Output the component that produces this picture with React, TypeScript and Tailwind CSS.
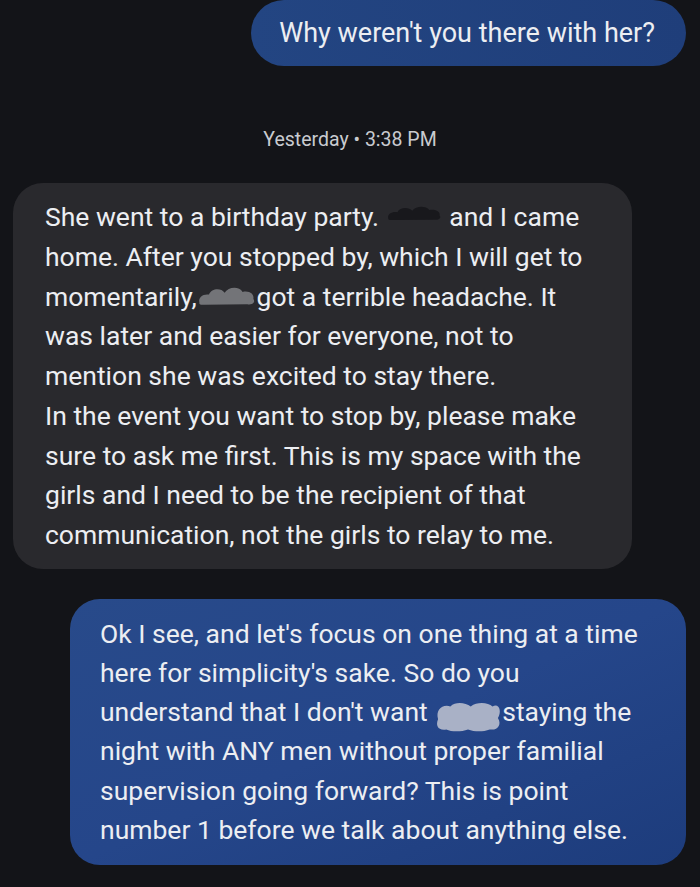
import React from 'react'

const CLOUD =
  'M4 42 C2 30 10 22 20 24 C24 10 40 8 46 20 C52 6 70 4 76 18 C86 14 96 22 94 34 C98 42 92 48 84 46 L12 47 C6 48 3 46 4 42 Z'
const LUMP =
  'M6 30 C2 16 12 6 24 10 C32 2 46 4 54 10 C64 2 80 4 86 10 C96 4 100 18 94 28 C100 38 94 48 82 46 C72 50 60 50 50 46 C40 50 26 50 18 46 C6 48 2 40 6 30 Z'

const Blob = ({ w, h, color, shift = 0, d = CLOUD }: { w: number; h: number; color: string; shift?: number; d?: string }) => (
  <svg
    width={w}
    height={h}
    viewBox="0 0 100 50"
    preserveAspectRatio="none"
    className="inline-block align-middle"
    style={{ transform: `translateY(${shift}px)` }}
  >
    <path d={d} fill={color} />
  </svg>
)

export default function App() {
  return (
    <div
      className="w-[700px] h-[887px] overflow-hidden bg-[#131418] flex flex-col text-[#eceef2]"
      style={{ fontFamily: 'Roboto, "Liberation Sans", sans-serif' }}
    >
      <div className="self-end mr-[14px] h-[66px] rounded-full bg-gradient-to-r from-[#234582] to-[#1f3e7a] pl-[28px] pr-[31px] flex items-center text-[27px]">
        Why weren't you there with her?
      </div>

      <div className="mt-[61px] text-center text-[19.5px] leading-[26px] text-[#c9cbd0]">
        Yesterday • 3:38 PM
      </div>

      <div className="mt-[30px] ml-[13px] w-[619px] rounded-[30px] bg-[#29292d] pl-[32px] pt-[14px] pb-[14px] text-[26.5px] leading-[39.75px]">
        <div className="whitespace-nowrap">
          She went to a birthday party. <Blob w={57} h={17} color="#18181c" shift={-7} /> and I came
        </div>
        <div className="whitespace-nowrap">home. After you stopped by, which I will get to</div>
        <div className="whitespace-nowrap">
          momentarily,<Blob w={60} h={22} color="#737478" shift={-4} />got a terrible headache. It
        </div>
        <div className="whitespace-nowrap">was later and easier for everyone, not to</div>
        <div className="whitespace-nowrap">mention she was excited to stay there.</div>
        <div className="whitespace-nowrap">In the event you want to stop by, please make</div>
        <div className="whitespace-nowrap">sure to ask me first. This is my space with the</div>
        <div className="whitespace-nowrap">girls and I need to be the recipient of that</div>
        <div className="whitespace-nowrap">communication, not the girls to relay to me.</div>
      </div>

      <div className="mt-[30px] ml-[70px] w-[616px] rounded-[30px] bg-gradient-to-br from-[#284a8a] via-[#25468a] to-[#1d3c7c] pl-[30px] pt-[15px] pb-[16px] text-[26.5px] leading-[39.2px]">
        <div className="whitespace-nowrap">Ok I see, and let's focus on one thing at a time</div>
        <div className="whitespace-nowrap">here for simplicity's sake. So do you</div>
        <div className="whitespace-nowrap">
          understand that I don't want <Blob w={68} h={32} color="#a9b1c6" shift={2} d={LUMP} />staying the
        </div>
        <div className="whitespace-nowrap">night with ANY men without proper familial</div>
        <div className="whitespace-nowrap">supervision going forward? This is point</div>
        <div className="whitespace-nowrap">number 1 before we talk about anything else.</div>
      </div>
    </div>
  )
}
